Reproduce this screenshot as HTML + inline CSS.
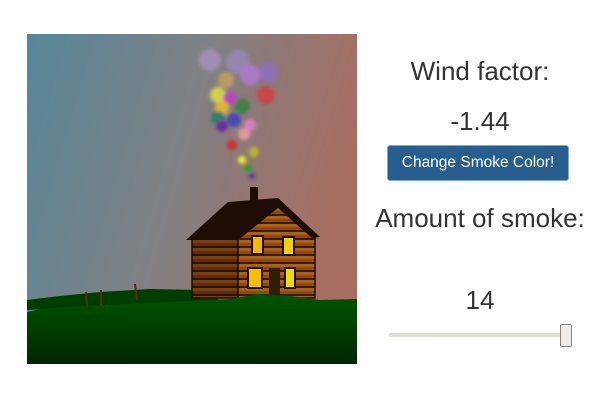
<!DOCTYPE html>
<html><head><style>
body{margin:0;width:600px;height:400px;background:#fff;position:relative;font-family:"Liberation Sans",sans-serif;color:#333;overflow:hidden}
.t{position:absolute;left:360px;width:240px;text-align:center;font-size:26px}
.btn{position:absolute;left:387px;top:145px;width:182px;height:36px;background:#285e8e;border:1px solid #7aa7e0;border-radius:3px;color:#fff;font-size:15.5px;line-height:34px;text-align:center;box-sizing:border-box}
</style></head><body>
<svg width="600" height="400" style="position:absolute;left:0;top:0">
<defs>
<linearGradient id="sky" x1="0" y1="0" x2="1" y2="0.3"><stop offset="0" stop-color="#568699"/><stop offset="0.5" stop-color="#7e8185"/><stop offset="1" stop-color="#a86e62"/></linearGradient>
<linearGradient id="gr" x1="0" y1="0" x2="0" y2="1"><stop offset="0" stop-color="#005500"/><stop offset="1" stop-color="#002500"/></linearGradient>
<pattern id="logs" width="10" height="8" patternUnits="userSpaceOnUse"><rect width="10" height="8" fill="#8a4a10"/><rect y="0" width="10" height="3" fill="#a8601a"/><rect y="6" width="10" height="2" fill="#3a1a05"/></pattern>
<pattern id="logs2" width="10" height="8" patternUnits="userSpaceOnUse"><rect width="10" height="8" fill="#5a2e0c"/><rect y="0" width="10" height="3" fill="#7a3e12"/><rect y="6" width="10" height="2" fill="#2a1204"/></pattern>
<filter id="bl"><feGaussianBlur stdDeviation="1.8"/></filter>
<clipPath id="c"><rect x="27" y="34" width="330" height="330"/></clipPath>
</defs>
<g clip-path="url(#c)">
<rect x="27" y="34" width="330" height="330" fill="url(#sky)"/>
<g filter="url(#bl)" opacity="0.85">
<circle cx="210" cy="60" r="11" fill="#a890c0"/><circle cx="238" cy="62" r="12" fill="#9a86b8"/><circle cx="268" cy="72" r="10" fill="#8c6fc0"/><circle cx="250" cy="75" r="10" fill="#b07ad0"/>
<circle cx="226" cy="80" r="8" fill="#c0a060"/><circle cx="266" cy="95" r="9" fill="#d04040"/><circle cx="218" cy="95" r="8" fill="#e0e040"/><circle cx="230" cy="98" r="7" fill="#c040c0"/>
<circle cx="242" cy="106" r="8" fill="#3a8040"/><circle cx="222" cy="108" r="7" fill="#f0c020"/><circle cx="218" cy="118" r="7" fill="#208060"/><circle cx="234" cy="120" r="7" fill="#4040c0"/>
<circle cx="250" cy="125" r="6" fill="#e080d0"/><circle cx="222" cy="126" r="6" fill="#6020a0"/><circle cx="244" cy="134" r="6" fill="#f0a0a0"/><circle cx="232" cy="145" r="5" fill="#e02020"/>
<circle cx="254" cy="152" r="5" fill="#c0c020"/><circle cx="242" cy="160" r="4" fill="#ffff20"/><circle cx="248" cy="168" r="4" fill="#20a020"/><circle cx="252" cy="176" r="3" fill="#4020a0"/>
</g>
<path d="M27 300 L60 296 L100 292 L150 289 L200 290 L220 300 L27 310Z" fill="#003d00"/>
<g stroke="#5a2a10" stroke-width="2"><line x1="86" y1="292" x2="87" y2="306"/><line x1="101" y1="290" x2="101" y2="305"/><line x1="135" y1="284" x2="137" y2="300"/></g>
<rect x="250" y="187" width="8" height="14" fill="#1e0d05"/>
<rect x="192" y="238" width="48" height="60" fill="url(#logs2)" stroke="#1e0d05" stroke-width="1.5"/>
<polygon points="238,238 278,206 315,238 315,298 238,298" fill="url(#logs)" stroke="#1e0d05" stroke-width="1.5"/>
<polygon points="186,240 228,202 278,198 320,237 312,238 278,208 238,240" fill="#1e0d05"/>
<rect x="252" y="236" width="11" height="18" fill="#f5b800" stroke="#1e0d05" stroke-width="2"/>
<rect x="283" y="237" width="11" height="18" fill="#f0d010" stroke="#1e0d05" stroke-width="2"/>
<rect x="248" y="268" width="14" height="20" fill="#f5c000" stroke="#1e0d05" stroke-width="2"/>
<rect x="285" y="268" width="10" height="20" fill="#f0d810" stroke="#1e0d05" stroke-width="2"/>
<rect x="269" y="268" width="11" height="28" fill="#2e1e08"/>
<path d="M27 312 L40 309 L80 306 L150 303 L230 299 L258 294 L290 296 L320 300 L357 299 L357 364 L27 364Z" fill="url(#gr)"/>
</g>
</svg>
<div class="t" style="top:56px">Wind factor:</div>
<div class="t" style="top:106px">-1.44</div>
<div class="btn">Change Smoke Color!</div>
<div class="t" style="top:203px">Amount of smoke:</div>
<div class="t" style="top:285px">14</div>
<div style="position:absolute;left:389px;top:333px;width:183px;height:4px;background:#e0dcd6;border-radius:2px"></div>
<div style="position:absolute;left:560px;top:324px;width:10px;height:21px;background:#efedea;border:1px solid #8a8580;border-radius:2px"></div>
</body></html>
